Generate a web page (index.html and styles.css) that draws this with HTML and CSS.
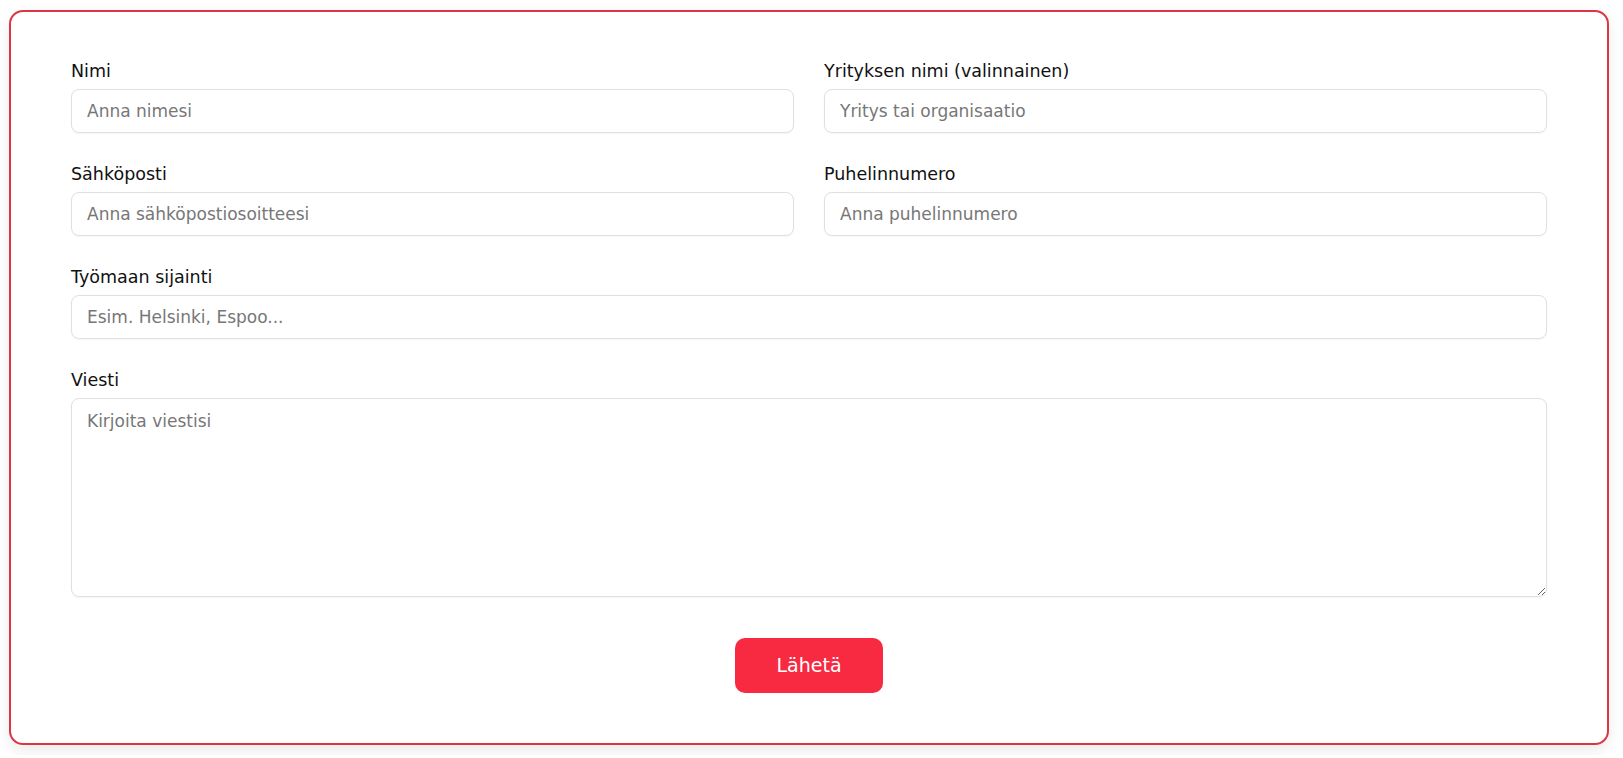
FILE: index.html
```html
<!DOCTYPE html>
<html lang="fi">
<head>
    <meta charset="utf-8">
    <title>Yhteydenotto</title>
    <!-- Styles for the contact form live in a separate file -->
    <link rel="stylesheet" href="styles.css">
</head>

<body>
    <!-- Contact form card -->
    <div class="form-card">
        <form class="contact-form">
            <div class="form-grid">
                <div class="field">
                    <label for="name">Nimi</label>
                    <input type="text" id="name" placeholder="Anna nimesi">
                </div>
                <div class="field">
                    <label for="company">Yrityksen nimi (valinnainen)</label>
                    <input type="text" id="company" placeholder="Yritys tai organisaatio">
                </div>
                <div class="field">
                    <label for="email">Sähköposti</label>
                    <input type="email" id="email" placeholder="Anna sähköpostiosoitteesi">
                </div>
                <div class="field">
                    <label for="phone">Puhelinnumero</label>
                    <input type="tel" id="phone" placeholder="Anna puhelinnumero">
                </div>
                <div class="field full">
                    <label for="location">Työmaan sijainti</label>
                    <input type="text" id="location" placeholder="Esim. Helsinki, Espoo...">
                </div>
                <div class="field full">
                    <label for="message">Viesti</label>
                    <textarea id="message" placeholder="Kirjoita viestisi"></textarea>
                </div>
            </div>

            <!-- Submit button -->
            <div class="actions">
                <button type="submit" class="submit-btn">Lähetä</button>
            </div>
        </form>
    </div>
</body>
</html>
```

FILE: styles.css
```css
body {
    font-family: "DejaVu Sans", sans-serif;
    background-color: #fff;
    margin: 0;
    padding: 10px 10px 10px 9px;
    color: #111;
}

.form-card {
    box-sizing: border-box;
    max-width: 1600px;
    background-color: #fff;
    border: 2px solid #dc3545;
    border-radius: 14px;
    padding: 46px 60px 50px;
    box-shadow: 0 6px 16px rgba(0, 0, 0, 0.08);
}

.form-grid {
    display: grid;
    grid-template-columns: 1fr 1fr;
    column-gap: 30px;
    row-gap: 28px;
}

.field.full {
    grid-column: 1 / -1;
}

.field label {
    display: block;
    font-size: 17.5px;
    line-height: 26px;
    margin-bottom: 5px;
    color: #111;
}

.field input,
.field textarea {
    display: block;
    box-sizing: border-box;
    width: 100%;
    border: 1px solid #e0e0e0;
    border-radius: 8px;
    background-color: #fff;
    font-family: inherit;
    font-size: 17px;
    color: #222;
    box-shadow: 0 1px 2px rgba(0, 0, 0, 0.04);
}

.field input {
    height: 44px;
    padding: 0 15px;
}

.field textarea {
    height: 199px;
    padding: 12px 15px;
    resize: vertical;
}

.field input::placeholder,
.field textarea::placeholder {
    color: #777;
}

.actions {
    text-align: center;
    margin-top: 41px;
}

.submit-btn {
    background-color: #f72a42;
    color: #fff;
    border: none;
    border-radius: 10px;
    padding: 16px 41px;
    font-family: inherit;
    font-size: 19px;
    line-height: 23px;
    cursor: pointer;
}
```
